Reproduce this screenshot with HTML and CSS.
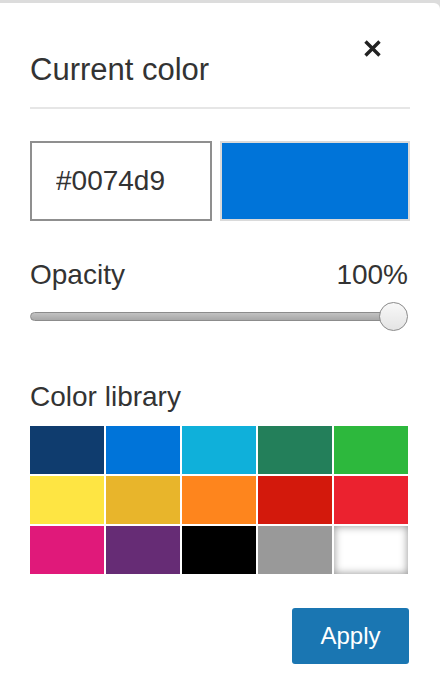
FILE: index.html
```html
<!DOCTYPE html>
<html lang="en">
<head>
    <meta charset="UTF-8">
    <meta name="viewport" content="width=device-width, initial-scale=1.0">
    <title>Color picker</title>
    <link rel="stylesheet" href="styles.css">
</head>
<body>
    <div class="panel">
        <div class="head">
            <h2 class="title">Current color</h2>
            <button type="button" class="close" aria-label="Close">
                <svg width="19" height="19" viewBox="0 0 19 19"><path d="M2.5 2.5 L16.5 16.5 M16.5 2.5 L2.5 16.5" stroke="#222" stroke-width="3.4"/></svg>
            </button>
        </div>
        <div class="current">
            <input type="text" class="hex" value="#0074d9">
            <div class="preview"></div>
        </div>
        <div class="opacity">
            <div class="row">
                <span>Opacity</span>
                <span>100%</span>
            </div>
            <div class="slider">
                <div class="track"></div>
                <div class="thumb"></div>
            </div>
        </div>
        <div class="library">
            <p class="label">Color library</p>
            <div class="swatches">
                <div class="sw" style="background:#0f3c6e"></div>
                <div class="sw" style="background:#0074d9"></div>
                <div class="sw" style="background:#0fb0da"></div>
                <div class="sw" style="background:#237f5a"></div>
                <div class="sw" style="background:#2db83d"></div>
                <div class="sw" style="background:#fee543"></div>
                <div class="sw" style="background:#e8b52b"></div>
                <div class="sw" style="background:#fe851d"></div>
                <div class="sw" style="background:#d3190c"></div>
                <div class="sw" style="background:#eb222f"></div>
                <div class="sw" style="background:#e0197a"></div>
                <div class="sw" style="background:#662c75"></div>
                <div class="sw" style="background:#000000"></div>
                <div class="sw" style="background:#999999"></div>
                <div class="sw white"></div>
            </div>
        </div>
        <div class="foot">
            <button type="button" class="apply">Apply</button>
        </div>
    </div>
</body>
</html>
```

FILE: styles.css
```css
body{
    margin: 0;
    background: #dcdcdc;
    font-family: "Liberation Sans", Arial, sans-serif;
    color: #333;
}
.panel{
    margin-top: 3px;
    background: #fff;
    border-radius: 0 6px 0 0;
    height: 689px;
    padding: 0 30px;
    box-sizing: border-box;
}
.head{
    display: flex;
    justify-content: space-between;
    border-bottom: 2px solid #e6e6e6;
    height: 104px;
}
.title{
    margin: 0;
    padding-top: 50px;
    font-size: 31px;
    font-weight: normal;
    line-height: 34px;
}
.close{
    border: 0;
    background: none;
    padding: 0;
    margin: 36px 28px 0 0;
    width: 19px;
    height: 19px;
    cursor: pointer;
}
.current{
    display: flex;
    gap: 8px;
    margin-top: 32px;
}
.hex{
    width: 182px;
    height: 80px;
    box-sizing: border-box;
    border: 2px solid #8f8f8f;
    padding: 0 0 0 24px;
    font-family: "Liberation Sans", Arial, sans-serif;
    font-size: 28px;
    color: #333;
    outline: none;
}
.preview{
    flex: 1;
    height: 80px;
    box-sizing: border-box;
    border: 2px solid #dadada;
    background: #0074d9;
}
.opacity{margin-top: 38px;}
.row{
    display: flex;
    justify-content: space-between;
    font-size: 28px;
    line-height: 32px;
    padding-right: 2px;
}
.slider{
    position: relative;
    height: 30px;
    margin-top: 11px;
}
.track{
    position: absolute;
    left: 0;
    right: 16px;
    top: 10px;
    height: 9px;
    border-radius: 5px;
    border: 1px solid #8c8c8c;
    box-sizing: border-box;
    background: linear-gradient(#c2c2c2, #a8a8a8);
}
.thumb{
    position: absolute;
    right: 2px;
    top: 0;
    width: 29px;
    height: 29px;
    box-sizing: border-box;
    border-radius: 50%;
    border: 1px solid #8a8a8a;
    background: linear-gradient(#f8f8f8, #e4e4e4);
}
.library{margin-top: 49px;}
.label{
    margin: 0 0 13px 0;
    font-size: 28px;
    line-height: 32px;
}
.swatches{
    display: grid;
    grid-template-columns: repeat(5, 74px);
    grid-auto-rows: 48px;
    gap: 2px;
}
.sw.white{
    background: #fff;
    box-shadow: inset 0 0 8px rgba(0,0,0,0.45);
}
.foot{
    display: flex;
    justify-content: flex-end;
    margin-top: 34px;
}
.apply{
    width: 117px;
    height: 56px;
    margin-right: 1px;
    border: 0;
    border-radius: 3px;
    background: #1a76b2;
    color: #fff;
    font-family: "Liberation Sans", Arial, sans-serif;
    font-size: 24px;
    cursor: pointer;
}
```
